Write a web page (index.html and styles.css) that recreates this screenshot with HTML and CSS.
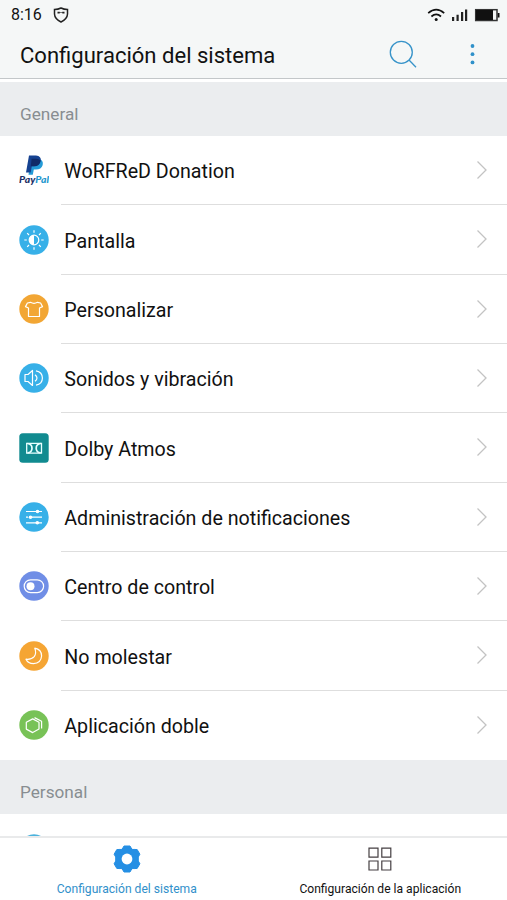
FILE: index.html
```html
<!DOCTYPE html>
<html lang="es">
<head>
<meta charset="utf-8">
<title>Configuración del sistema</title>
<link rel="stylesheet" href="styles.css">
</head>
<body>
<div class="screen">
  <header class="top">
    <div class="status">
      <span class="time">8:16</span>
      <svg class="shield" width="16" height="16" viewBox="0 0 16 16" fill="none" stroke="#222" stroke-width="1.500"><path d="M8 1Q11 2.500 14.500 2.600V7Q14.300 12 8 15Q1.700 12 1.500 7V2.600Q5 2.500 8 1Z"/><path d="M4.500 5.700H6.700M9.300 5.700H11.500" stroke-width="1.800"/><path d="M6 5.500H10" stroke-width=".6"/></svg>
      <svg class="signals" width="73" height="14" viewBox="0 0 73 14">
        <g fill="none" stroke="#111" stroke-width="1.700"><path d="M1.200 5.200Q9.200-1.800 17.200 5.200"/><path d="M4.400 8.500Q9.200 4.200 14 8.500"/></g>
        <circle cx="9.200" cy="11.500" r="1.500" fill="#111"/>
        <path d="M25 9h2.200v4h-2.200zM29.500 6.700h2.200v6.300h-2.200zM34 4h2.200v9h-2.200zM38 1.500h2.200v11.500h-2.200z" fill="#222"/>
        <rect x="48.700" y="1.700" width="21.300" height="10.800" fill="none" stroke="#333" stroke-width="1.500"/><path d="M49 2h17v10H49zM70.700 5h1.800v4.500h-1.800z" fill="#111"/>
      </svg>
    </div>
    <div class="bar">
      <h1>Configuración del sistema</h1>
      <svg class="search" width="28" height="28" viewBox="0 0 28 28" fill="none" stroke="#3793c9" stroke-width="1.300"><circle cx="12.300" cy="12.300" r="11"/><path d="M20 20L27 27.300"/></svg>
      <svg class="more" width="6" height="22" viewBox="0 0 6 22" fill="#2f91ca"><circle cx="3.500" cy="3" r="1.900"/><circle cx="3.500" cy="11.200" r="1.900"/><circle cx="3.500" cy="19.400" r="1.900"/></svg>
    </div>
  </header>
  <main>
    <h2>General</h2>
    <ul>
      <li><svg class="icon" viewBox="0 0 30 30"><path d="M12 3.500H19.500Q24.800 5 23.700 10Q22.300 14.500 17 14.500H14.800L13.800 19.700H9.500Z" fill="#249bd7"/><path d="M10 .5H17Q22.600 1 21.700 6Q20.700 11.300 15 11.300H12.800L11.700 17.500H7Z" fill="#164291"/><path d="M12.600 3.700H17Q19.800 3.800 21.600 5.500Q20.700 11.300 15 11.300H11.800Z" fill="#102b68"/><text class="pp" x="0" y="28.300" textLength="30" lengthAdjust="spacingAndGlyphs"><tspan fill="#1d2f65">Pay</tspan><tspan fill="#2597ce">Pal</tspan></text></svg><div class="cell"><span>WoRFReD Donation</span><svg class="chev" viewBox="0 0 12 20"><path d="M1.500 1.500L10 10L1.500 18.500"/></svg></div></li>
      <li><svg class="icon" viewBox="0 0 30 30"><circle cx="15" cy="15" r="14.700" fill="#37b0e8"/><g class="ln"><circle cx="15" cy="15" r="4.800"/><path d="M15 5.300v2.500M15 22.200v2.500M5.300 15h2.500M22.200 15h2.500M8.200 8.200l1.800 1.800M20 20l1.800 1.800M8.200 21.800l1.800-1.800M20 10l1.800-1.800"/></g><path d="M15 10.200A4.800 4.800 0 0 0 15 19.800Z" fill="#fff"/></svg><div class="cell"><span>Pantalla</span><svg class="chev" viewBox="0 0 12 20"><path d="M1.500 1.500L10 10L1.500 18.500"/></svg></div></li>
      <li><svg class="icon" viewBox="0 0 30 30"><circle cx="15" cy="15" r="14.700" fill="#f2a634"/><path class="ln" d="M11.500 8.300Q15 10.300 18.500 8.300L21.600 9L23.500 12.600L20.500 14V22.500H9.500V14L6.500 12.600L8.400 9Z"/></svg><div class="cell"><span>Personalizar</span><svg class="chev" viewBox="0 0 12 20"><path d="M1.500 1.500L10 10L1.500 18.500"/></svg></div></li>
      <li><svg class="icon" viewBox="0 0 30 30"><circle cx="15" cy="15" r="14.700" fill="#37b0e8"/><path class="ln" d="M6 11.500H9L13.500 7.500V22.500L9 18.500H6ZM16 11.700Q20 15 16 18.300M17 7.800Q23.400 9 23.400 15Q23.400 21 17 22.200"/></svg><div class="cell"><span>Sonidos y vibración</span><svg class="chev" viewBox="0 0 12 20"><path d="M1.500 1.500L10 10L1.500 18.500"/></svg></div></li>
      <li><svg class="icon" viewBox="0 0 30 30"><rect x=".3" y=".3" width="29.400" height="29.400" rx="3.500" fill="#118b90"/><path d="M7.700 10.300H22.500V20.100H7.700Z" fill="none" stroke="#e7ffff" stroke-width="1.300"/><path d="M8.500 10.500Q13 11 13 15.200Q13 19.400 8.500 19.900M21.700 10.500Q17.200 11 17.200 15.200Q17.200 19.400 21.700 19.900" fill="none" stroke="#e7ffff" stroke-width="1.700"/></svg><div class="cell"><span>Dolby Atmos</span><svg class="chev" viewBox="0 0 12 20"><path d="M1.500 1.500L10 10L1.500 18.500"/></svg></div></li>
      <li><svg class="icon" viewBox="0 0 30 30"><circle cx="15" cy="15" r="14.700" fill="#37b0e8"/><path class="ln" d="M7 9.500H23M7 15.200H9M11 15.200H23M7 20.800H23"/><g fill="#fff"><circle cx="18.500" cy="9.500" r="1.800"/><circle cx="11.500" cy="15.200" r="1.800"/><circle cx="18.300" cy="20.800" r="1.800"/></g></svg><div class="cell"><span>Administración de notificaciones</span><svg class="chev" viewBox="0 0 12 20"><path d="M1.500 1.500L10 10L1.500 18.500"/></svg></div></li>
      <li><svg class="icon" viewBox="0 0 30 30"><circle cx="15" cy="15" r="14.700" fill="#708ee6"/><rect class="ln" x="5.200" y="8.800" width="19.400" height="12.800" rx="6.400"/><circle cx="11.500" cy="15.200" r="4" fill="#fff"/></svg><div class="cell"><span>Centro de control</span><svg class="chev" viewBox="0 0 12 20"><path d="M1.500 1.500L10 10L1.500 18.500"/></svg></div></li>
      <li><svg class="icon" viewBox="0 0 30 30"><circle cx="15" cy="15" r="14.700" fill="#f5a534"/><path class="ln" d="M15.800 7.200Q22.600 8.500 22.600 15Q22 22.300 14.500 22.700Q9 22.600 7 18.200Q12.500 18.800 15.200 15.700Q17.700 12 15.800 7.200Z"/></svg><div class="cell"><span>No molestar</span><svg class="chev" viewBox="0 0 12 20"><path d="M1.500 1.500L10 10L1.500 18.500"/></svg></div></li>
      <li><svg class="icon" viewBox="0 0 30 30"><circle cx="15" cy="15" r="14.700" fill="#78c257"/><path class="ln" d="M13.700 8.900L20 12.300V19.100L13.700 22.600L7.300 19.100V12.300ZM15.500 7.600L22.600 11.200V18.500"/></svg><div class="cell"><span>Aplicación doble</span><svg class="chev" viewBox="0 0 12 20"><path d="M1.500 1.500L10 10L1.500 18.500"/></svg></div></li>
    </ul>
    <h2>Personal</h2>
    <div class="peek"><svg class="icon" viewBox="0 0 30 30"><circle cx="15" cy="15" r="14.700" fill="#4bb2dc"/></svg></div>
  </main>
  <nav>
    <div class="tab active"><svg width="28" height="28" viewBox="-14 -14 28 28"><path d="M-3-13H3L4.800-9.900Q6-9.200 7-9.600L10.200-9.400L12.900-4.800L11.300-2V2L12.900 4.800L10.200 9.400L7 9.600Q6 9.200 4.800 9.900L3 13H-3L-4.800 9.900Q-6 9.200-7 9.600L-10.200 9.400L-12.900 4.800L-11.300 2V-2L-12.900-4.800L-10.200-9.400L-7-9.600Q-6-9.200-4.800-9.900Z" fill="#258fe4" stroke="#258fe4" stroke-width="1" stroke-linejoin="round"/><circle r="5.400" fill="#fff"/></svg><span>Configuración del sistema</span></div>
    <div class="tab"><svg width="28" height="28" viewBox="0 0 28 28"><path d="M3 3.200h9v9H3zM15.800 3.200h9v9h-9zM3 16h9v9H3zM15.800 16h9v9h-9z" fill="none" stroke="#453f42" stroke-width="1.200"/></svg><span>Configuración de la aplicación</span></div>
  </nav>
</div>
</body>
</html>
```

FILE: styles.css
```css
* { box-sizing: border-box; }
body { margin: 0; font-family: Roboto, "Liberation Sans", sans-serif; color: #111; background: #fff; }
.screen { width: 507px; height: 900px; display: flex; flex-direction: column; overflow: hidden; }
.top { height: 79px; flex: none; background: #f5f7f7; border-bottom: 1px solid #c3c7c9; }
.status { height: 30px; display: flex; align-items: center; padding: 0 7px 0 11px; }
.time { font-size: 16px; line-height: 30px; }
.shield { margin-left: 11px; }
.signals { margin-left: auto; }
.bar { height: 48px; display: flex; align-items: center; padding: 0 32px 0 20px; }
h1 { margin: 3px 0 0; font-size: 22.050px; font-weight: 400; line-height: 30px; white-space: nowrap; }
.search { margin-left: auto; }
.more { margin: 0 0 0 52px; }
main { flex: 1; min-height: 0; overflow: hidden; padding-top: 3px; }
h2 { margin: 0; height: 54px; padding: 20px 20px 0; background: #ebedef; color: #888d91; font-size: 17.200px; line-height: 24px; font-weight: 400; }
ul { list-style: none; margin: 0; padding: 0; }
li { height: 69.330px; display: flex; align-items: center; padding-left: 19.300px; }
.icon { width: 30px; height: 30px; flex: none; display: block; margin-top: -.5px; }
.pp { font: italic 900 8.500px Lato, sans-serif; }
.ln { fill: none; stroke: #fff; stroke-width: 1.200; stroke-linejoin: round; }
.cell { flex: 1; height: 100%; margin-left: 12px; padding: 1px 19px 0 3px; display: flex; align-items: center; justify-content: space-between; border-bottom: 1px solid #dedede; font-size: 19.650px; white-space: nowrap; }
.cell span { padding-top: 2.600px; }
li:last-child .cell { border-bottom-color: transparent; }
.chev { width: 12px; height: 20px; margin-top: -1px; fill: none; stroke: #c3c3c3; stroke-width: 1.300; }
.peek { padding: 20.500px 0 0 19.300px; }
nav { height: 64px; flex: none; display: flex; border-top: 2px solid #e9eaeb; background: #fff; }
.tab { flex: 1; display: flex; flex-direction: column; align-items: center; padding-top: 7px; font-size: 12.100px; line-height: 18px; }
.tab span { margin-top: 6.500px; }
.active { color: #3190ca; }
```
